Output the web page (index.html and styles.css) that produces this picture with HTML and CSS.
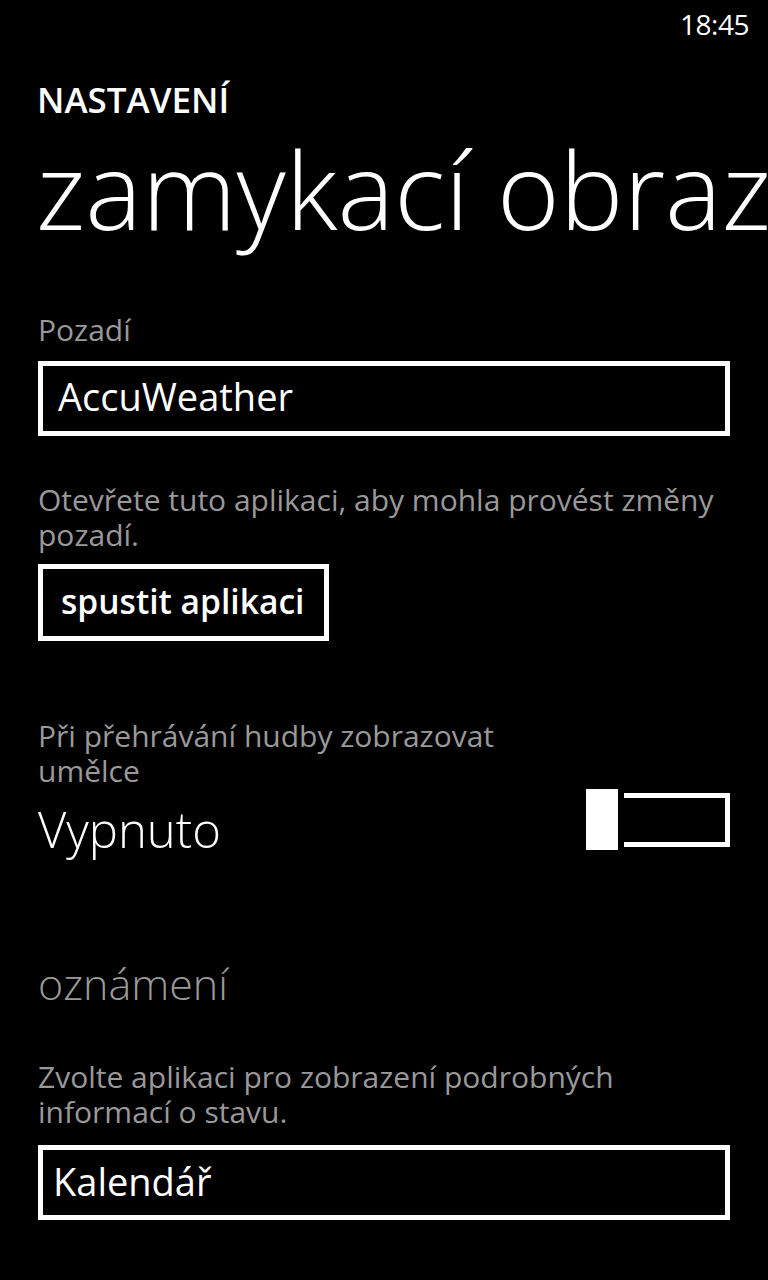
FILE: index.html
```html
<!DOCTYPE html>
<html lang="cs">
<head>
<meta charset="utf-8">
<title>zamykací obrazovka</title>
<link rel="stylesheet" href="styles.css">
</head>
<body>
<div class="screen">
  <div class="status"><span class="time">18:45</span></div>
  <div class="page">
    <div class="app-title">NASTAVENÍ</div>
    <div class="page-title">zamykací obrazovka</div>

    <div class="label label-bg">Pozadí</div>
    <div class="picker picker-bg">AccuWeather</div>

    <div class="label label-desc">Otevřete tuto aplikaci, aby mohla provést změny<br>pozadí.</div>
    <div class="button-row"><span class="button">spustit aplikaci</span></div>

    <div class="label label-music">Při přehrávání hudby zobrazovat<br>umělce</div>
    <div class="toggle-row">
      <div class="toggle-value">Vypnuto</div>
      <div class="toggle">
        <div class="toggle-thumb"></div>
        <div class="toggle-track"></div>
      </div>
    </div>

    <div class="section-title">oznámení</div>
    <div class="label label-notif">Zvolte aplikaci pro zobrazení podrobných<br>informací o stavu.</div>
    <div class="picker picker-cal">Kalendář</div>
  </div>
</div>
</body>
</html>
```
FILE: styles.css
```css
html, body {
  margin: 0;
  padding: 0;
  background: #000;
}
body {
  width: 768px;
  height: 1280px;
  overflow: hidden;
  color: #fff;
  font-family: "Open Sans", "Noto Sans", "DejaVu Sans", sans-serif;
}
.screen {
  width: 768px;
  height: 1280px;
  overflow: hidden;
}
.status {
  padding: 10px 19px 0 0;
  height: 28px;
  text-align: right;
}
.time {
  font-size: 28px;
  line-height: 28px;
  letter-spacing: -0.5px;
  font-weight: 400;
}
.page {
  padding: 0 38px 0 38px;
}
.app-title {
  margin-top: 42px;
  font-size: 35px;
  line-height: 40px;
  font-weight: 600;
  margin-left: -1px;
}
.page-title {
  margin-top: 14px;
  font-size: 107px;
  line-height: 110px;
  font-weight: 300;
  white-space: nowrap;
  margin-left: -2px;
}
.label {
  color: #999999;
  font-size: 30px;
  line-height: 35px;
  white-space: nowrap;
}
.label-bg { margin-top: 68px; }
.label-desc { margin-top: 46px; }
.label-music { margin-top: 77px; }
.label-notif { margin-top: 50px; }

.picker {
  border: 5px solid #fff;
  height: 65px;
  line-height: 60px;
  font-size: 38px;
  font-weight: 400;
  white-space: nowrap;
}
.picker-bg {
  margin-top: 14px;
  padding-left: 15px;
}
.picker-cal {
  margin-top: 16px;
  padding-left: 10px;
  line-height: 62px;
}
.button-row {
  margin-top: 12px;
  display: flex;
}
.button {
  display: block;
  border: 5px solid #fff;
  height: 67px;
  line-height: 65px;
  padding: 0 20px 0 18px;
  font-size: 33.6px;
  font-weight: 600;
  white-space: nowrap;
}
.toggle-row {
  display: flex;
  justify-content: space-between;
  align-items: flex-start;
}
.toggle-value {
  margin-top: 11px;
  font-size: 49px;
  line-height: 60px;
  font-weight: 300;
}
.toggle {
  margin-top: 1px;
  display: flex;
  align-items: center;
}
.toggle-thumb {
  width: 32px;
  height: 61px;
  background: #fff;
}
.toggle-track {
  margin-left: 6px;
  width: 101px;
  height: 44px;
  border: 5px solid #fff;
  border-left: none;
}
.section-title {
  margin-top: 100px;
  color: #999999;
  font-size: 43px;
  line-height: 50px;
  font-weight: 300;
}
```
